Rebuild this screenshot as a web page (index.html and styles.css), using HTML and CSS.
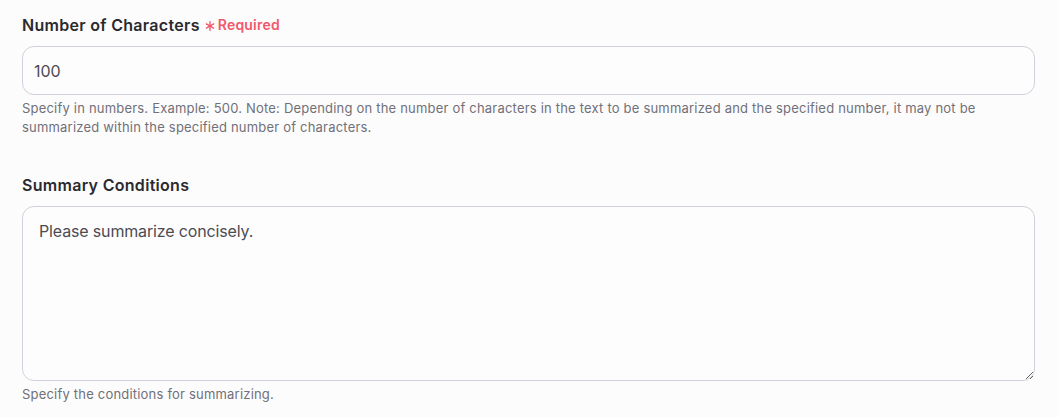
FILE: index.html
```html
<!DOCTYPE html>
<html lang="en">
<head>
<meta charset="utf-8">
<link rel="stylesheet" href="styles.css">
</head>
<body>
<div class="form">
  <div class="field">
    <label class="label">Number of Characters <span class="req"><svg class="ast" viewBox="0 0 10 10" width="10" height="10"><g stroke="currentColor" stroke-width="1.4" stroke-linecap="round"><line x1="5" y1="0.8" x2="5" y2="9.2"/><line x1="1.4" y1="2.9" x2="8.6" y2="7.1"/><line x1="1.4" y1="7.1" x2="8.6" y2="2.9"/></g></svg>Required</span></label>
    <input class="input" type="text" value="100">
    <p class="help">Specify in numbers. Example: 500. Note: Depending on the number of characters in the text to be summarized and the specified number, it may not be summarized within the specified number of characters.</p>
  </div>
  <div class="field field2">
    <label class="label">Summary Conditions</label>
    <textarea class="textarea">Please summarize concisely.</textarea>
    <p class="help">Specify the conditions for summarizing.</p>
  </div>
</div>
</body>
</html>
```
FILE: styles.css
```css
html, body {
  margin: 0;
  padding: 0;
  background: #fdfcfd;
}
body {
  font-family: Inter, "Noto Sans", sans-serif;
  color: #27272a;
}
.form {
  padding: 14px 23px 0 22px;
  display: flex;
  flex-direction: column;
}
.field {
  display: flex;
  flex-direction: column;
}
.field2 {
  margin-top: 37px;
}
.label {
  font-size: 16px;
  font-weight: 600;
  line-height: 22px;
  letter-spacing: 0.3px;
  color: #2a2a2e;
  margin-bottom: 10px;
  display: flex;
  align-items: center;
}
.req {
  color: #f0596b;
  font-size: 14px;
  font-weight: 600;
  letter-spacing: 0.2px;
  margin-left: 5px;
  display: inline-flex;
  align-items: center;
}
.ast {
  margin-right: 3px;
  margin-top: 1px;
}
.input, .textarea {
  box-sizing: border-box;
  width: 100%;
  border: 1px solid #cfd2dc;
  border-radius: 12px;
  background: #fefdfe;
  font-family: Inter, "Noto Sans", sans-serif;
  font-size: 16px;
  color: #4b4b52;
  outline: none;
  margin: 0;
}
.input {
  height: 49px;
  padding: 0 11px;
}
.textarea {
  height: 175px;
  padding: 13px 16px;
  line-height: 22px;
  letter-spacing: -0.15px;
  resize: vertical;
  display: block;
}
.help {
  margin: 4px 0 0 0;
  font-size: 13px;
  line-height: 19px;
  letter-spacing: 0.2px;
  color: #707078;
}
```
